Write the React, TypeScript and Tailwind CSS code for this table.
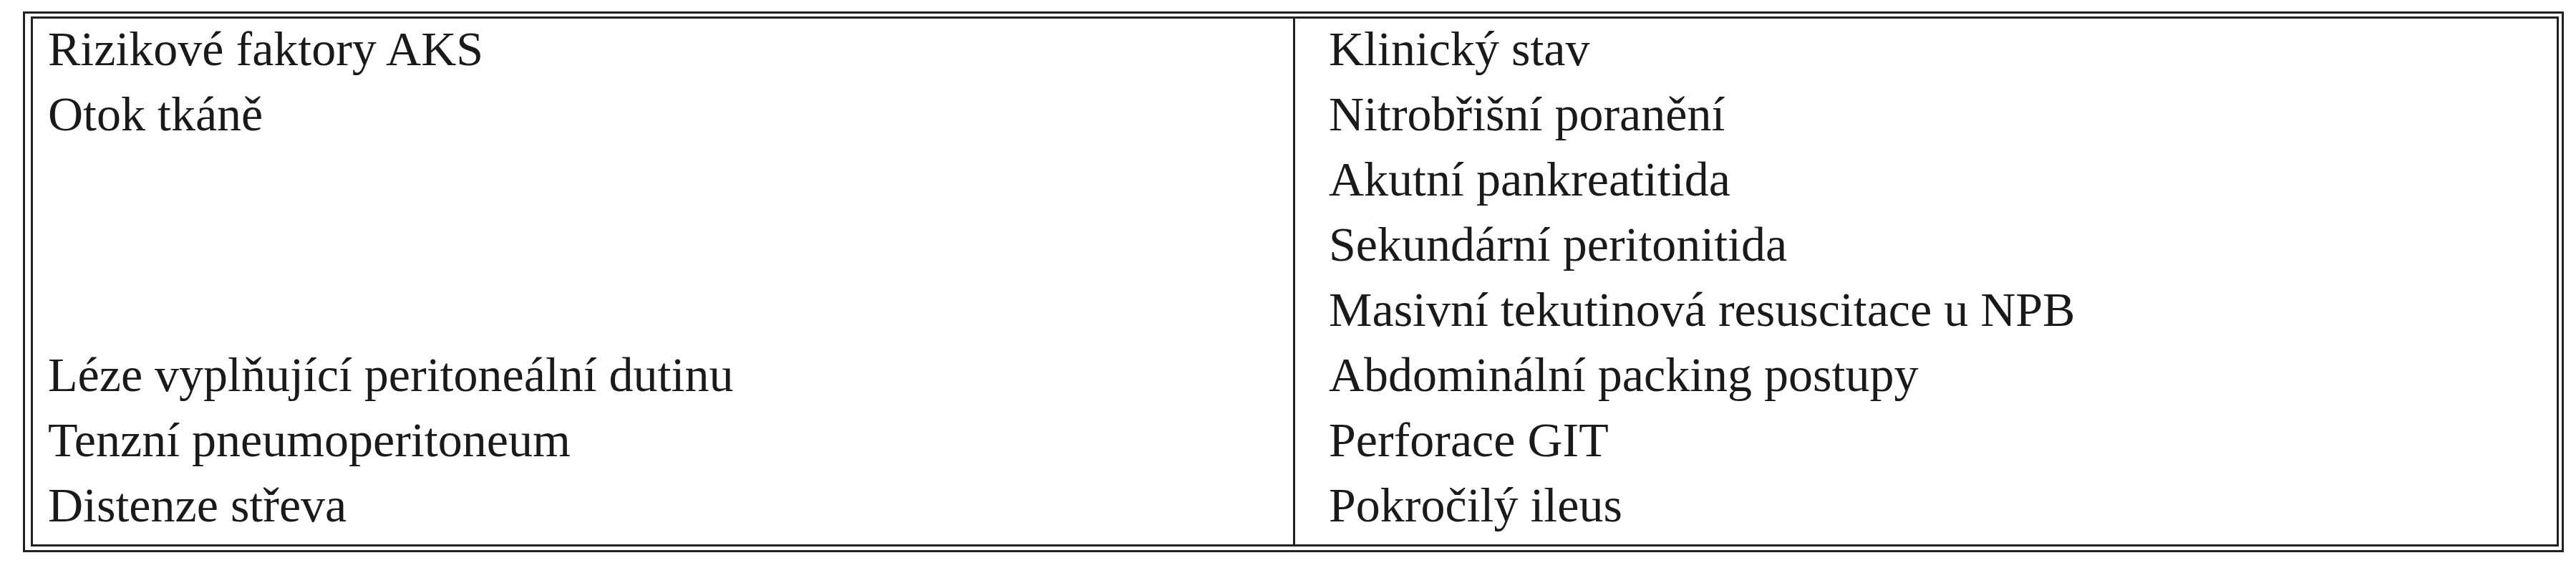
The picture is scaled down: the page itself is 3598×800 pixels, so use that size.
const rows: [string, string][] = [
  ["Rizikové faktory AKS", "Klinický stav"],
  ["Otok tkáně", "Nitrobřišní poranění"],
  ["", "Akutní pankreatitida"],
  ["", "Sekundární peritonitida"],
  ["", "Masivní tekutinová resuscitace u NPB"],
  ["Léze vyplňující peritoneální dutinu", "Abdominální packing postupy"],
  ["Tenzní pneumoperitoneum", "Perforace GIT"],
  ["Distenze střeva", "Pokročilý ileus"],
];

export default function App() {
  return (
    <div className="min-h-[800px] w-[3598px] bg-white pl-[32px] pt-[16px] font-['Liberation_Serif','Times_New_Roman',serif] text-[68px] text-[#1a1a1a]">
      <div className="w-[3549px] border-[3px] border-[#222] pb-[5px] pl-[8px] pr-[4px] pt-[4px]">
        <div className="flex h-[740px] border-[3px] border-[#222]">
          <div className="w-[1763px] border-r-[3px] border-[#222] pb-[6px]">
            {rows.map(([left], i) => (
              <div key={i} className="h-[91px] whitespace-nowrap pl-[21px] leading-[84px]">
                {left}
              </div>
            ))}
          </div>
          <div className="flex-1 pb-[6px]">
            {rows.map(([, right], i) => (
              <div key={i} className="h-[91px] whitespace-nowrap pl-[47px] leading-[84px]">
                {right}
              </div>
            ))}
          </div>
        </div>
      </div>
    </div>
  );
}
